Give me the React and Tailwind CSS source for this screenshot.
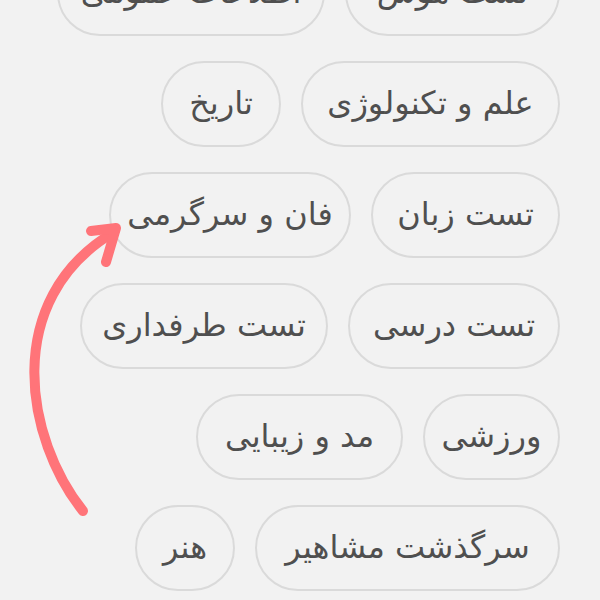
const rows = [
  [
    { label: 'تست هوش', w: 'w-[215px]' },
    { label: 'اطلاعات عمومی', w: 'w-[268px]' },
  ],
  [
    { label: 'علم و تکنولوژی', w: 'w-[259px]' },
    { label: 'تاریخ', w: 'w-[120px]' },
  ],
  [
    { label: 'تست زبان', w: 'w-[189px]' },
    { label: 'فان و سرگرمی', w: 'w-[242px]' },
  ],
  [
    { label: 'تست درسی', w: 'w-[212px]' },
    { label: 'تست طرفداری', w: 'w-[248px]' },
  ],
  [
    { label: 'ورزشی', w: 'w-[137px]' },
    { label: 'مد و زیبایی', w: 'w-[207px]' },
  ],
  [
    { label: 'سرگذشت مشاهیر', w: 'w-[305px]' },
    { label: 'هنر', w: 'w-[100px]' },
  ],
];

function Chip({ label, w }) {
  return (
    <button
      className={`${w} h-[86px] shrink-0 rounded-full border-2 border-[#dadada] bg-[#f2f2f2] flex items-center justify-center pb-[3px] text-[32px] text-[#4f4f4f] font-['DejaVu_Sans',sans-serif]`}
    >
      {label}
    </button>
  );
}

export default function App() {
  return (
    <div className="relative w-[600px] h-[600px] overflow-hidden bg-[#f2f2f2]">
      <div className="-mt-[50px] flex flex-col gap-[25px] pr-[40px]">
        {rows.map((row, i) => (
          <div key={i} dir="rtl" className="flex gap-[20px]">
            {row.map((chip) => (
              <Chip key={chip.label} {...chip} />
            ))}
          </div>
        ))}
      </div>

      {/* hand-drawn pointer */}
      <svg className="absolute left-0 top-0 pointer-events-none" width="600" height="600" viewBox="0 0 600 600">
        <g fill="none" stroke="#ff7479" strokeWidth="10" strokeLinecap="round" strokeLinejoin="round">
          <path d="M83 511 C 26 440, 0 300, 114 232" />
          <path d="M91 231 L 116 228 L 106 262" />
        </g>
      </svg>
    </div>
  );
}
